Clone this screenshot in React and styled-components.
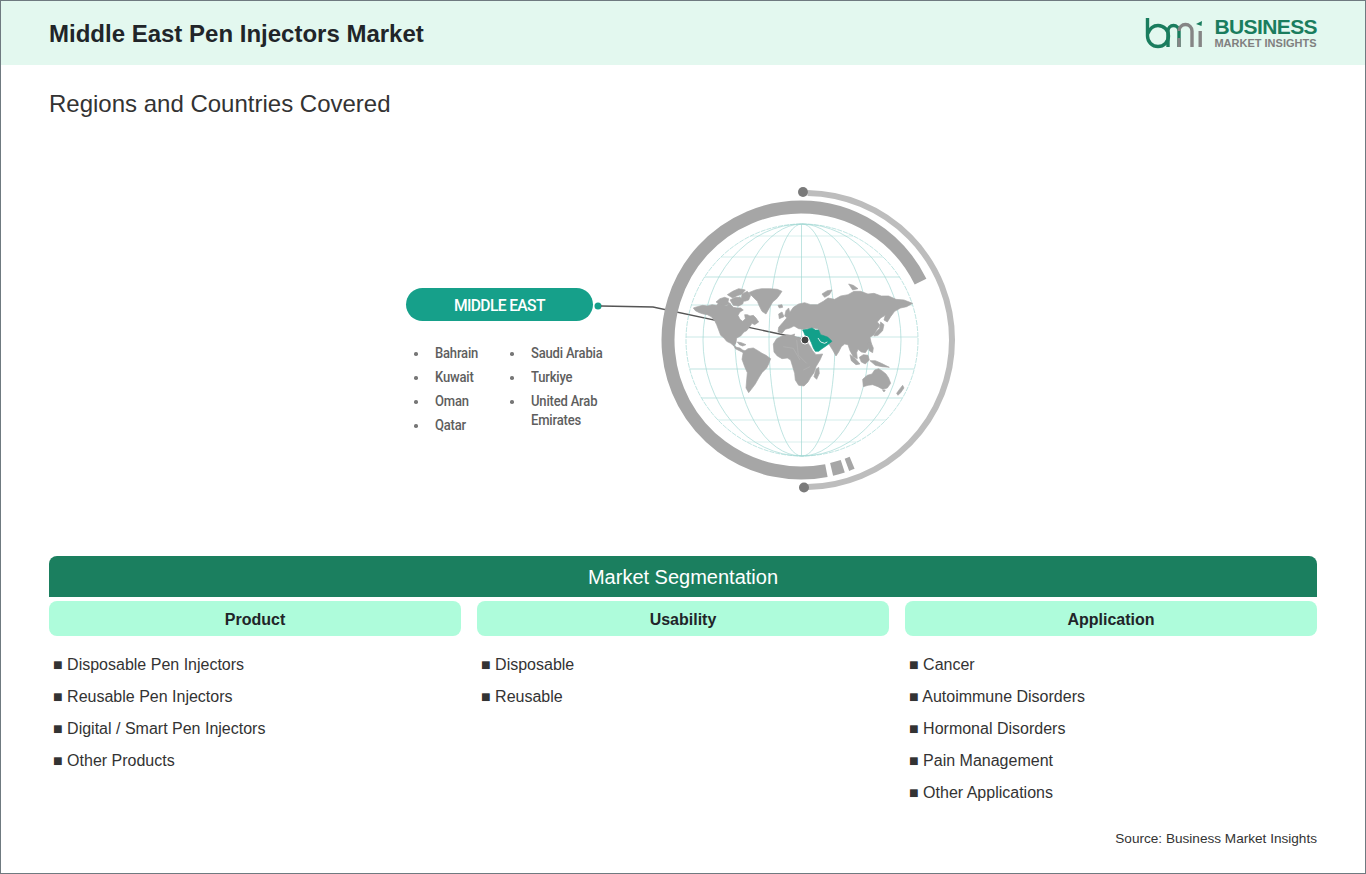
import styled, { createGlobalStyle } from 'styled-components'

const GlobalStyle = createGlobalStyle`
    html, body {
        margin: 0;
        padding: 0;
        background: #fff;
    }
    * {
        box-sizing: border-box;
    }
`

const leftCountries = [['Bahrain'], ['Kuwait'], ['Oman'], ['Qatar']]
const rightCountries = [['Saudi Arabia'], ['Turkiye'], ['United Arab', 'Emirates']]

const segments = [
    { title: 'Product', items: ['Disposable Pen Injectors', 'Reusable Pen Injectors', 'Digital / Smart Pen Injectors', 'Other Products'] },
    { title: 'Usability', items: ['Disposable', 'Reusable'] },
    { title: 'Application', items: ['Cancer', 'Autoimmune Disorders', 'Hormonal Disorders', 'Pain Management', 'Other Applications'] },
]

// globe helpers, angle 0 = top, going clockwise
const polar = (cx, cy, r, deg) => {
    const a = (deg * Math.PI) / 180
    return [cx + r * Math.sin(a), cy - r * Math.cos(a)]
}

const arc = (cx, cy, r, from, to) => {
    const [x1, y1] = polar(cx, cy, r, from)
    const [x2, y2] = polar(cx, cy, r, to)
    const large = to - from > 180 ? 1 : 0
    return `M${x1} ${y1} A${r} ${r} 0 ${large} 1 ${x2} ${y2}`
}

const meridians = [33, 67, 99]
const parallels = [
    { y: 236, o: 0.6 }, { y: 257, o: 0.7 }, { y: 277, o: 1 }, { y: 305, o: 0.8 }, { y: 337, o: 0.8 },
    { y: 369, o: 1 }, { y: 398, o: 1 }, { y: 420, o: 0.7 }, { y: 442, o: 0.6 },
]

// coastlines traced at 3x, origin 690,280
const land = [
    // north america
    'M10 84 L22 80 L38 76 L52 78 L66 74 L80 76 L86 68 L97 72 L108 78 L120 72 L130 82 L142 84 L152 84 L160 90 L150 96 L144 106 L150 118 L158 124 L166 116 L164 104 L172 104 L180 108 L190 106 L198 114 L206 126 L194 134 L186 130 L178 142 L170 152 L162 156 L152 168 L140 174 L138 188 L132 198 L122 190 L110 184 L102 174 L92 166 L86 150 L80 134 L74 122 L64 110 L52 104 L40 102 L28 98 L16 92 Z',
    'M130 194 L140 202 L150 204 L158 210 L168 214 L160 218 L148 212 L136 206 Z',
    'M142 186 L154 188 L168 194 L158 198 L148 194 Z',
    // arctic islands
    'M78 66 L90 56 L104 52 L116 56 L114 66 L122 72 L106 76 L92 74 Z',
    'M112 44 L128 34 L146 26 L166 30 L156 42 L140 48 L128 54 Z',
    'M120 60 L136 52 L150 52 L162 60 L158 72 L146 78 L130 76 Z',
    'M156 42 L172 34 L182 46 L176 60 L164 64 L154 56 Z',
    // greenland
    'M176 38 L196 30 L214 26 L240 26 L262 28 L276 34 L268 46 L260 56 L248 66 L240 80 L228 102 L216 94 L208 78 L202 64 L192 54 Z',
    'M264 76 L276 74 L278 82 L268 84 Z',
    // south america
    'M160 216 L174 206 L190 204 L204 212 L216 220 L228 226 L242 236 L236 252 L230 264 L216 278 L206 294 L196 312 L184 328 L176 338 L168 324 L170 300 L172 278 L164 260 L156 238 Z',
    // africa
    'M250 192 L260 176 L276 168 L292 164 L304 166 L314 170 L326 172 L338 180 L350 184 L360 198 L368 212 L378 224 L398 222 L390 240 L378 260 L372 278 L362 292 L354 306 L342 318 L326 316 L316 300 L314 280 L308 260 L302 240 L292 234 L276 236 L262 228 L252 216 Z',
    'M378 268 L386 262 L388 280 L380 298 L372 290 Z',
    // europe and asia
    'M266 142 L278 128 L292 112 L300 96 L310 82 L326 72 L344 68 L362 74 L382 74 L400 64 L414 54 L434 58 L452 48 L474 44 L492 34 L512 34 L534 42 L552 40 L574 48 L596 48 L618 58 L642 60 L668 70 L650 80 L632 84 L614 94 L602 110 L592 126 L582 120 L586 106 L572 114 L562 126 L570 136 L560 150 L552 164 L540 172 L544 190 L536 204 L526 218 L514 216 L504 208 L500 218 L502 236 L490 230 L480 212 L474 194 L464 192 L454 200 L446 216 L438 228 L428 210 L418 194 L404 178 L392 164 L384 146 L364 144 L340 148 L326 146 L312 138 L300 144 L286 148 L276 160 L264 156 Z',
    'M288 92 L296 84 L300 100 L292 114 L284 108 Z',
    'M266 102 L276 96 L282 110 L268 116 Z',
    'M476 12 L490 16 L504 26 L488 30 Z',
    'M396 42 L412 32 L426 30 L418 44 L404 52 Z',
    'M298 168 L314 162 L312 170 Z',
    // japan and the islands
    'M572 126 L582 134 L578 152 L564 166 L552 168 L556 158 L568 146 Z',
    'M508 232 L520 224 L534 226 L538 240 L526 252 L514 246 Z',
    'M480 224 L494 234 L510 252 L498 254 L484 242 Z',
    'M540 242 L556 242 L574 250 L598 262 L576 260 L556 256 Z',
    'M532 190 L544 190 L550 204 L548 218 L538 212 Z',
    // australia and new zealand
    'M518 298 L532 286 L546 282 L554 270 L566 266 L578 274 L588 282 L596 294 L602 310 L592 324 L578 328 L564 320 L548 314 L534 316 L520 320 Z',
    'M620 340 L630 326 L638 316 L642 324 L632 338 L624 346 Z',
    'M578 330 L586 330 L582 336 Z',
]

const Logo = () => (
    <svg width="60" height="32" viewBox="0 0 60 32">
        <path d="M2.500 1 V19 A10.500 10.500 0 1 0 13 8.500 C8 8.500 4.500 12 2.500 17" fill="none" stroke="#1a7d5e" strokeWidth="3.400" />
        <path d="M23 30 V14 A5.500 5.500 0 0 1 34 14 V30" fill="none" stroke="#1a7d5e" strokeWidth="3.400" />
        <path d="M34 14 A6.500 6.500 0 0 1 47 14 V30" fill="none" stroke="#858585" strokeWidth="3.400" />
        <path d="M34 21 V30" fill="none" stroke="#858585" strokeWidth="3.400" />
        <rect x="53.500" y="14" width="3.400" height="16" fill="#858585" />
        <path d="M51 7 L57 4 L56.500 9 Z" fill="#1a7d5e" />
    </svg>
)

const Globe = () => (
    <GlobeSvg viewBox="640 170 330 330">
        <defs>
            <clipPath id="globeClip">
                <circle cx="802" cy="340" r="116" />
            </clipPath>
        </defs>

        <circle cx="598" cy="306" r="3.500" fill="#16a08a" />
        <path d="M601 306 L653 307 L803 339" fill="none" stroke="#555" strokeWidth="1.300" />

        <path d={arc(805, 340, 147, 1, 179)} fill="none" stroke="#bdbdbd" strokeWidth="6" />
        <circle cx="803" cy="192" r="5" fill="#7a7a7a" />
        <circle cx="804" cy="487.500" r="5" fill="#7a7a7a" />

        <path d={arc(801, 340, 133, 169, 360)} fill="none" stroke="#a6a6a6" strokeWidth="13" />
        <path d={arc(801, 340, 133, 0, 64)} fill="none" stroke="#a6a6a6" strokeWidth="13" />
        <path d={arc(801, 340, 133, 161.700, 166.700)} fill="none" stroke="#a6a6a6" strokeWidth="13" />
        <path d={arc(801, 340, 133, 157.400, 159.800)} fill="none" stroke="#a6a6a6" strokeWidth="13" />

        <g fill="none" stroke="#a3d8d4" strokeWidth="0.700">
            <circle cx="802" cy="340" r="116" strokeDasharray="5 1" />
            <path d="M801.500 224 V456" />
            {meridians.map((rx) => (
                <ellipse key={rx} cx="802" cy="340" rx={rx} ry="116" />
            ))}
            <g clipPath="url(#globeClip)">
                {parallels.map((line) => (
                    <path key={line.y} d={`M686 ${line.y} H918`} strokeOpacity={line.o} />
                ))}
            </g>
        </g>

        <g transform="translate(690 280) scale(0.3333)" fill="#a6a6a6" stroke="#a6a6a6" strokeWidth="2" strokeLinejoin="round">
            {land.map((d) => (
                <path key={d} d={d} />
            ))}
            {/* inner borders */}
            <path fill="none" stroke="#b8b8b8" strokeWidth="1.500" d="M280 200 L310 205 L330 240 M320 180 L325 225 L350 250 M340 270 L360 260" />
            {/* middle east */}
            <path fill="#12a08a" stroke="#12a08a" d="M338 150 L352 148 L366 144 L376 150 L386 150 L392 164 L404 168 L414 172 L426 184 L416 192 L408 198 L396 206 L386 214 L376 214 L370 204 L364 188 L358 176 L346 168 L342 158 Z" />
            <path fill="none" stroke="#fff" strokeWidth="2.500" d="M384 174 L392 186 L404 190 L412 186" />
        </g>

        <circle cx="805" cy="340" r="4" fill="#444" stroke="#fff" strokeWidth="1" />
    </GlobeSvg>
)

const CountryList = ({ countries }) => (
    <Countries>
        {countries.map((lines) => (
            <Country key={lines[0]}>
                {lines.map((line) => (
                    <CountryLine key={line}>{line}</CountryLine>
                ))}
            </Country>
        ))}
    </Countries>
)

export default function App() {
    return (
        <>
            <GlobalStyle />
            <Frame>
                <Header>
                    <Title>Middle East Pen Injectors Market</Title>
                    <Brand>
                        <Logo />
                        <BrandText>
                            <BrandName>BUSINESS</BrandName>
                            <BrandSub>MARKET INSIGHTS</BrandSub>
                        </BrandText>
                    </Brand>
                </Header>
                <Subtitle>Regions and Countries Covered</Subtitle>
                <Stage>
                    <RegionPanel>
                        <RegionPill><PillLabel>MIDDLE EAST</PillLabel></RegionPill>
                        <CountryColumns>
                            <CountryList countries={leftCountries} />
                            <CountryList countries={rightCountries} />
                        </CountryColumns>
                    </RegionPanel>
                    <Globe />
                </Stage>
                <Segmentation>
                    <SegmentationBar>Market Segmentation</SegmentationBar>
                    <SegmentGrid>
                        {segments.map((segment) => (
                            <div key={segment.title}>
                                <SegmentHead>{segment.title}</SegmentHead>
                                <SegmentList>
                                    {segment.items.map((item) => (
                                        <SegmentItem key={item}>■ {item}</SegmentItem>
                                    ))}
                                </SegmentList>
                            </div>
                        ))}
                    </SegmentGrid>
                    <Source>Source: Business Market Insights</Source>
                </Segmentation>
            </Frame>
        </>
    )
}

const Frame = styled.div`
    width: 1366px;
    height: 874px;
    border: 1px solid #6f7a80;
    font-family: 'Liberation Sans', Arial, sans-serif;
    color: #333;
    overflow: hidden;
    background: #fff;
`

const Header = styled.header`
    height: 64px;
    background: #e3f8ef;
    padding: 1px 48px 0;
    display: flex;
    align-items: center;
    justify-content: space-between;
`

const Title = styled.h1`
    margin: 0;
    font-size: 24px;
    font-weight: 700;
    color: #212529;
`

const Brand = styled.div`
    display: flex;
    align-items: center;
    gap: 9px;
    margin-top: -2px;
`

const BrandText = styled.div`
    display: flex;
    flex-direction: column;
`

const BrandName = styled.span`
    font-size: 21px;
    line-height: 20px;
    font-weight: 700;
    color: #1a7d5e;
    letter-spacing: -0.6px;
`

const BrandSub = styled.span`
    font-size: 11px;
    line-height: 12px;
    font-weight: 700;
    color: #808080;
`

const Subtitle = styled.h2`
    margin: 0;
    padding: 25px 48px 0;
    height: 65px;
    font-size: 24px;
    line-height: 28px;
    font-weight: 400;
    color: #333;
`

const Stage = styled.section`
    height: 426px;
    padding: 40px 0 0 405px;
    display: flex;
    align-items: flex-start;
`

const RegionPanel = styled.div`
    width: 234px;
    padding-top: 118px;
    font-family: Roboto, 'Liberation Sans', sans-serif;
`

const RegionPill = styled.div`
    width: 187px;
    height: 33px;
    border-radius: 17px;
    background: #16a08a;
    color: #fff;
    display: flex;
    align-items: center;
    justify-content: center;
`

const PillLabel = styled.span`
    font-size: 17px;
    font-weight: 500;
    letter-spacing: -0.7px;
    transform: scaleX(0.92);
`

const CountryColumns = styled.div`
    display: grid;
    grid-template-columns: 96px 1fr;
    margin-top: 23px;
`

const Countries = styled.ul`
    list-style: none;
    margin: 0;
    padding: 0 0 0 29px;
`

const Country = styled.li`
    position: relative;
    margin-bottom: 5px;

    &::before {
        content: '';
        position: absolute;
        left: -21px;
        top: 8px;
        width: 3.500px;
        height: 3.500px;
        border-radius: 50%;
        background: #777;
    }
`

const CountryLine = styled.div`
    font-size: 14px;
    line-height: 19px;
    font-weight: 500;
    color: #5e5e5e;
    letter-spacing: -0.2px;
    transform: scaleX(0.93);
    transform-origin: left center;
    white-space: nowrap;
`

const GlobeSvg = styled.svg`
    width: 330px;
    height: 330px;
    flex: none;
    overflow: visible;
`

const Segmentation = styled.section`
    padding: 0 48px;
`

const SegmentationBar = styled.div`
    height: 41px;
    padding-top: 1px;
    background: #1b7f5f;
    border-radius: 8px 8px 0 0;
    color: #fff;
    font-size: 20px;
    display: flex;
    align-items: center;
    justify-content: center;
`

const SegmentGrid = styled.div`
    display: grid;
    grid-template-columns: repeat(3, 1fr);
    gap: 16px;
    margin-top: 4px;
`

const SegmentHead = styled.div`
    height: 35px;
    padding-top: 2px;
    background: #aefcdb;
    border-radius: 8px;
    color: #212529;
    font-size: 16px;
    font-weight: 700;
    display: flex;
    align-items: center;
    justify-content: center;
`

const SegmentList = styled.ul`
    list-style: none;
    margin: 13px 0 0;
    padding: 0 0 0 4px;
`

const SegmentItem = styled.li`
    height: 32px;
    font-size: 16px;
    line-height: 32px;
    color: #333;
`

const Source = styled.div`
    margin-top: 22px;
    text-align: right;
    font-size: 13.600px;
    line-height: 16px;
    color: #333;
`
